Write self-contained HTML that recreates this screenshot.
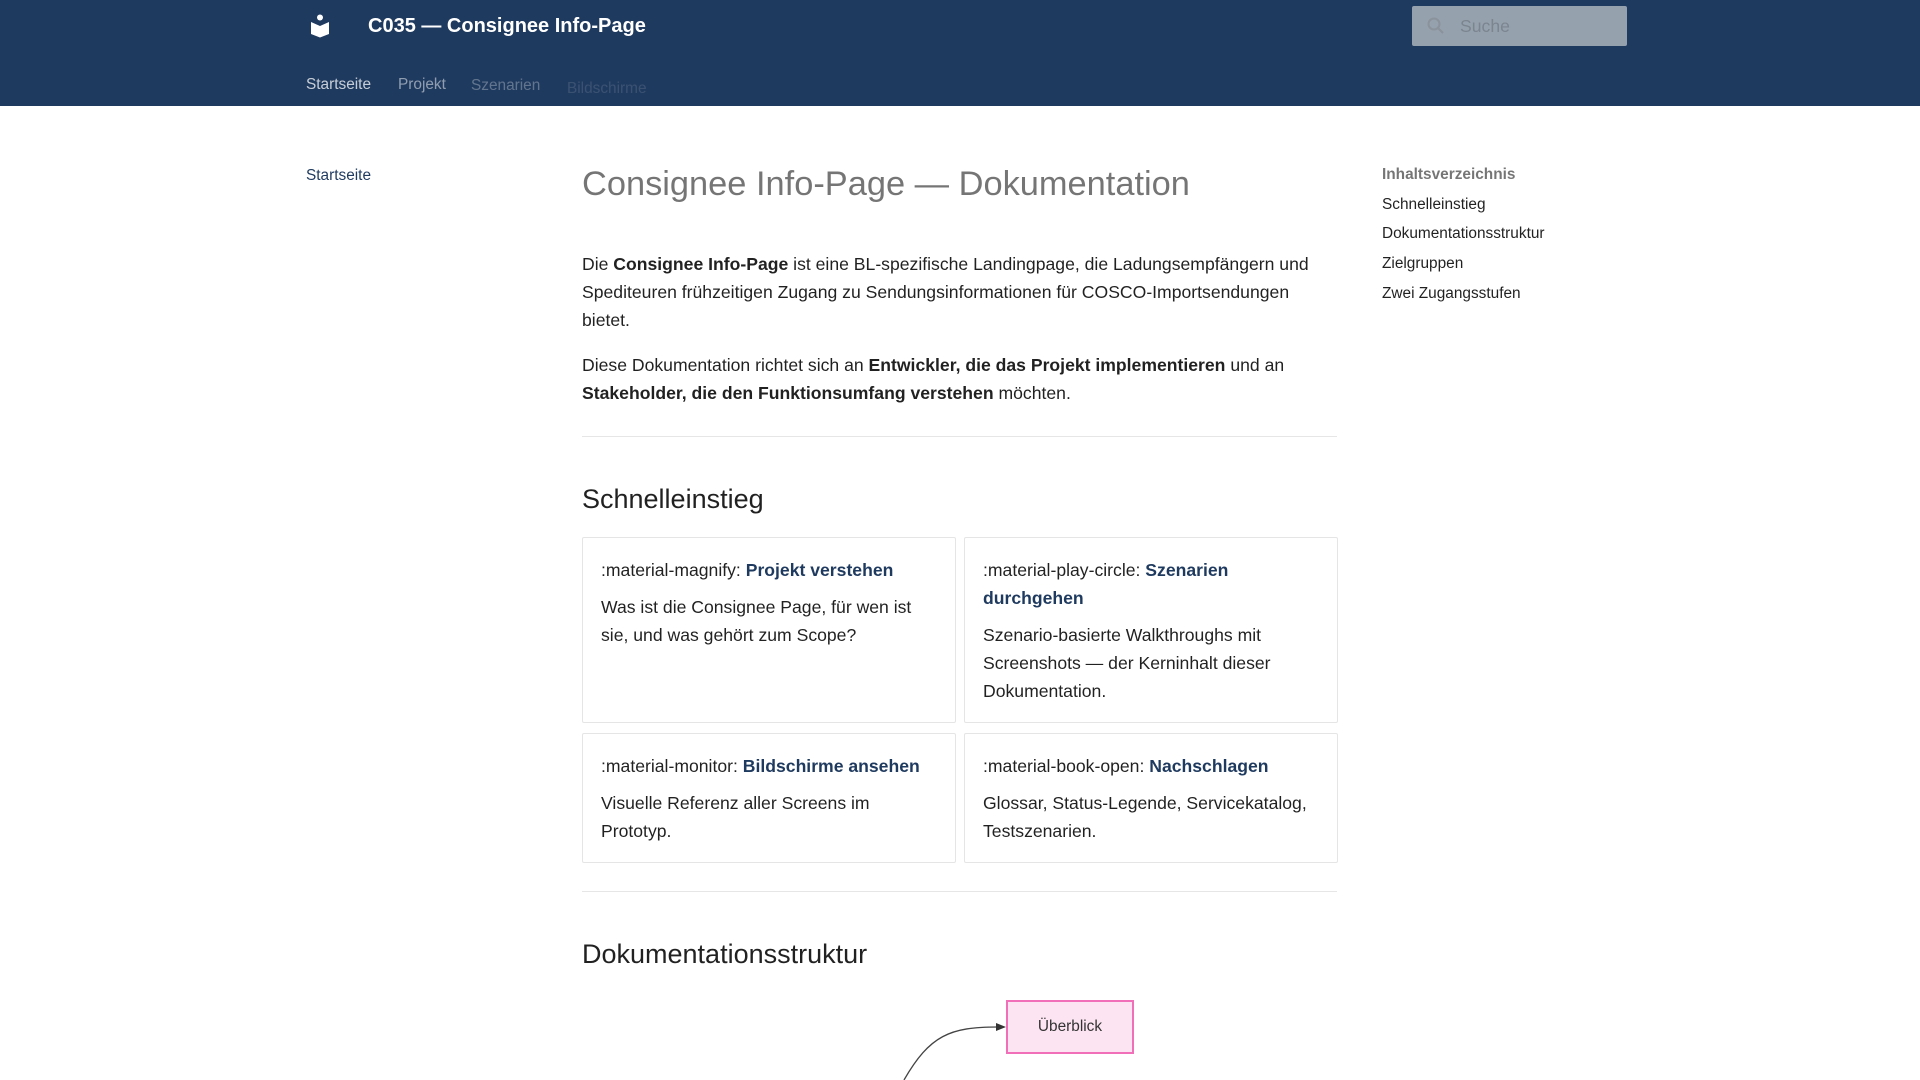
<!DOCTYPE html>
<html><head><meta charset="utf-8">
<style>
*{box-sizing:border-box;margin:0;padding:0}
body{width:1920px;height:1080px;overflow:hidden;background:#fff;font-family:"Liberation Sans",sans-serif;color:rgba(0,0,0,.87);position:relative}
.hdr{position:absolute;left:0;top:0;width:1920px;height:106px;background:#1f3a5f}
.abs{position:absolute;white-space:nowrap}
.title{left:368px;top:15px;font-size:20px;font-weight:bold;color:#fff}
.tab{top:76px;font-size:15.4px}
.search{left:1412px;top:6px;width:215px;height:40px;background:#96a1ae;border-radius:2px}
.search span{position:absolute;left:48px;top:10px;font-size:17.6px;color:#7b8590}
p,.c{font-size:17.6px;line-height:28px}
.h1{left:582px;top:165px;font-size:34.4px;font-weight:300;color:rgba(0,0,0,.54)}
.h2{font-size:27px;font-weight:300;color:rgba(0,0,0,.87)}
.hr{position:absolute;left:582px;width:755px;height:1px;background:#e6e6e6}
.card{position:absolute;border:1px solid #e5e5e5;border-radius:2px;padding:18px 18px}
.card a{color:#1f3a5f;font-weight:bold;text-decoration:none}
.card .t{margin-bottom:9px}
.toc{left:1382px;font-size:15.4px;color:rgba(0,0,0,.87)}
</style></head><body>
<div class="hdr"></div>
<svg class="abs" style="left:309px;top:14px" width="22" height="24" viewBox="0 0 22 24"><circle cx="11" cy="3.5" r="3" fill="#fff"/><path d="M2 8 L11 12 L20 8 V20 L11 23.5 L2 20 Z" fill="#fff"/></svg>
<div class="abs title">C035 — Consignee Info-Page</div>
<div class="abs tab" style="left:306px;color:rgba(255,255,255,.75)">Startseite</div>
<div class="abs tab" style="left:398px;color:rgba(255,255,255,.5)">Projekt</div>
<div class="abs tab" style="left:471px;top:77px;color:rgba(255,255,255,.3)">Szenarien</div>
<div class="abs tab" style="left:567px;top:80px;color:rgba(255,255,255,.12)">Bildschirme</div>
<div class="abs search"><svg style="position:absolute;left:14px;top:10px" width="20" height="20" viewBox="0 0 20 20"><circle cx="8" cy="8" r="5.5" fill="none" stroke="#8a929b" stroke-width="2"/><path d="M12 12 L17 17" stroke="#8a929b" stroke-width="2.2"/></svg><span>Suche</span></div>

<div class="abs" style="left:306px;top:167px;font-size:15.4px;color:#1f3a5f">Startseite</div>

<div class="abs h1">Consignee Info-Page — Dokumentation</div>
<div class="abs" style="left:582px;top:250px;width:755px;white-space:normal">
<p>Die <b>Consignee Info-Page</b> ist eine BL-spezifische Landingpage, die Ladungsempfängern und Spediteuren frühzeitigen Zugang zu Sendungsinformationen für COSCO-Importsendungen bietet.</p>
<p style="margin-top:17px">Diese Dokumentation richtet sich an <b>Entwickler, die das Projekt implementieren</b> und an <b>Stakeholder, die den Funktionsumfang verstehen</b> möchten.</p>
</div>
<div class="hr" style="top:436px"></div>
<div class="abs h2" style="left:582px;top:484px">Schnelleinstieg</div>

<div class="card c" style="left:582px;top:537px;width:374px;height:186px"><div class="t">:material-magnify: <a>Projekt verstehen</a></div>Was ist die Consignee Page, für wen ist sie, und was gehört zum Scope?</div>
<div class="card c" style="left:964px;top:537px;width:374px;height:186px"><div class="t">:material-play-circle: <a>Szenarien durchgehen</a></div>Szenario-basierte Walkthroughs mit Screenshots — der Kerninhalt dieser Dokumentation.</div>
<div class="card c" style="left:582px;top:733px;width:374px;height:130px"><div class="t">:material-monitor: <a>Bildschirme ansehen</a></div>Visuelle Referenz aller Screens im Prototyp.</div>
<div class="card c" style="left:964px;top:733px;width:374px;height:130px"><div class="t">:material-book-open: <a>Nachschlagen</a></div>Glossar, Status-Legende, Servicekatalog, Testszenarien.</div>

<div class="hr" style="top:891px"></div>
<div class="abs h2" style="left:582px;top:939px">Dokumentationsstruktur</div>
<div class="abs" style="left:1006px;top:1000px;width:128px;height:54px;background:#fce4f2;border:2px solid #f06fb8;font-size:15.4px;color:#333;text-align:center;line-height:50px">Überblick</div>
<svg class="abs" style="left:890px;top:1010px" width="120" height="70"><path d="M14 70 C40 25 60 17 108 17" fill="none" stroke="#444" stroke-width="1.3"/><path d="M106 13 L116 17 L106 21 Z" fill="#333"/></svg>

<div class="abs toc" style="top:166px;font-weight:bold;color:rgba(0,0,0,.54)">Inhaltsverzeichnis</div>
<div class="abs toc" style="top:196px">Schnelleinstieg</div>
<div class="abs toc" style="top:225px">Dokumentationsstruktur</div>
<div class="abs toc" style="top:255px">Zielgruppen</div>
<div class="abs toc" style="top:285px">Zwei Zugangsstufen</div>
</body></html>
